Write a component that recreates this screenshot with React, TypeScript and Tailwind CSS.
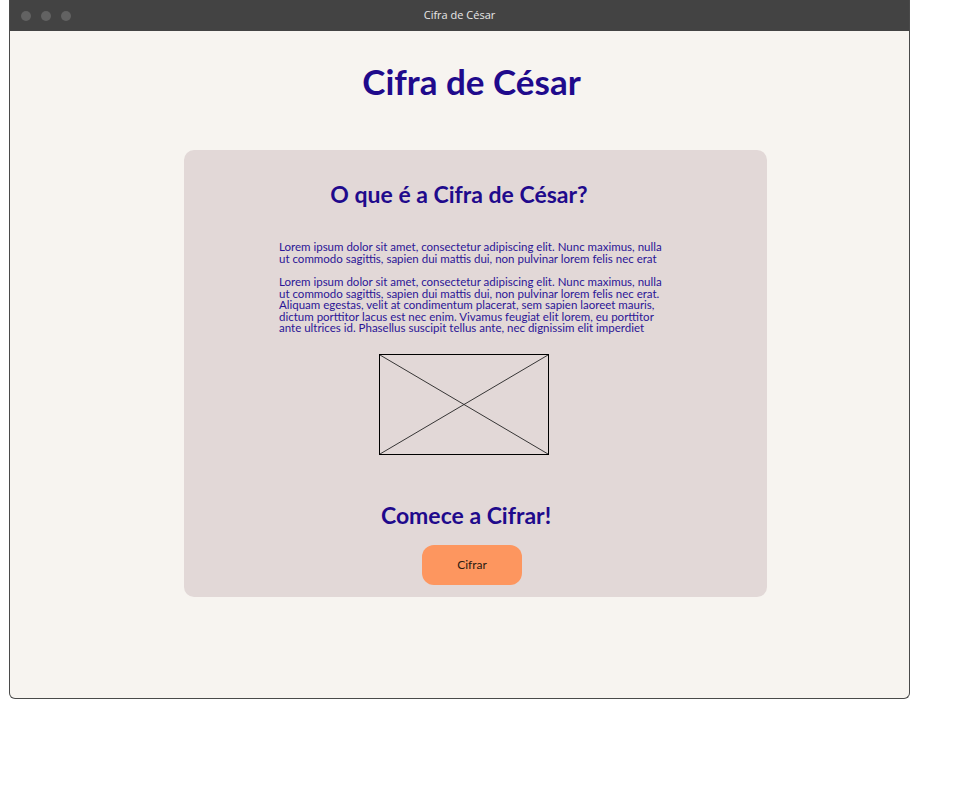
export default function App() {
  return (
    <div className="w-[958px] h-[798px] bg-white" style={{ fontFamily: 'Lato, "Noto Sans", sans-serif' }}>
      <div className="ml-[9px] w-[901px] h-[699px] border border-[#4a4a4a] border-t-0 rounded-b-[6px] overflow-hidden flex flex-col bg-[#f7f4f0]">
        {/* Title bar */}
        <div className="h-[31px] bg-[#434343] flex items-center relative shrink-0">
          <div className="flex gap-[10px] pl-[11px]">
            <span className="w-[10px] h-[10px] rounded-full bg-[#626262]" />
            <span className="w-[10px] h-[10px] rounded-full bg-[#626262]" />
            <span className="w-[10px] h-[10px] rounded-full bg-[#626262]" />
          </div>
          <div className="absolute inset-0 flex items-center justify-center text-[11px] text-[#e8e8e8]" style={{ fontFamily: '"Open Sans", sans-serif' }}>
            Cifra de César
          </div>
        </div>

        {/* Page */}
        <h1 className="mt-[29px] pl-[24px] text-center text-[35px] leading-[42px] font-bold text-[#1f0a8c]">Cifra de César</h1>

        <div className="mt-[48px] ml-[174px] w-[583px] h-[447px] rounded-[10px] bg-[#e2d8d7] flex flex-col">
          <h2 className="mt-[30px] mr-[33px] text-center text-[23px] leading-[28px] font-bold text-[#1f0a8c]">O que é a Cifra de César?</h2>

          <div className="mt-[33px] ml-[95px] w-[392px] text-[11.5px] leading-[11.5px] text-[#2b1596]">
            <p>
              Lorem ipsum dolor sit amet, consectetur adipiscing elit. Nunc maximus, nulla<br />
              ut commodo sagittis, sapien dui mattis dui, non pulvinar lorem felis nec erat
            </p>
            <p className="mt-[12px]">
              Lorem ipsum dolor sit amet, consectetur adipiscing elit. Nunc maximus, nulla<br />
              ut commodo sagittis, sapien dui mattis dui, non pulvinar lorem felis nec erat.<br />
              Aliquam egestas, velit at condimentum placerat, sem sapien laoreet mauris,<br />
              dictum porttitor lacus est nec enim. Vivamus feugiat elit lorem, eu porttitor<br />
              ante ultrices id. Phasellus suscipit tellus ante, nec dignissim elit imperdiet
            </p>
          </div>

          <div className="mt-[20px] ml-[195px] w-[170px] h-[101px] border border-black">
            <svg width="168" height="99" viewBox="0 0 168 99" className="block">
              <line x1="0" y1="0" x2="168" y2="99" stroke="#222" strokeWidth="0.9" />
              <line x1="168" y1="0" x2="0" y2="99" stroke="#222" strokeWidth="0.9" />
            </svg>
          </div>

          <h2 className="mt-[45px] mr-[19px] text-center text-[23px] leading-[30px] font-bold text-[#1f0a8c]">Comece a Cifrar!</h2>

          <button className="mt-[15px] ml-[238px] w-[100px] h-[40px] rounded-[12px] bg-[#fd965f] text-[12px] text-[#2a1a12]">
            Cifrar
          </button>
        </div>
      </div>
    </div>
  )
}
